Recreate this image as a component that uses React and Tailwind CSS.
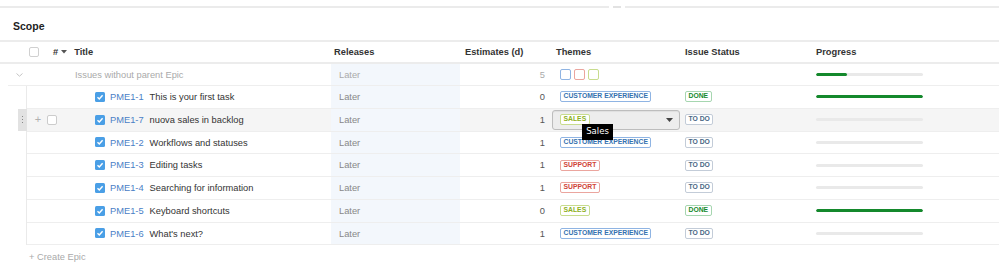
import React from 'react';

const themeStyles = {
    'CUSTOMER EXPERIENCE': 'text-[#3572b0] border-[#8fb4e3]',
    SALES: 'text-[#8eb021] border-[#c8dc8e]',
    SUPPORT: 'text-[#d04437] border-[#eba59e]',
};

const statusStyles = {
    DONE: 'text-[#14892c] border-[#a6d6b0]',
    'TO DO': 'text-[#4a6785] border-[#c3ccd8]',
};

const issues = [
    { key: 'PME1-1', title: 'This is your first task', estimate: 0, theme: 'CUSTOMER EXPERIENCE', status: 'DONE', progress: 100 },
    { key: 'PME1-7', title: 'nuova sales in backlog', estimate: 1, theme: 'SALES', status: 'TO DO', progress: 0, hover: true },
    { key: 'PME1-2', title: 'Workflows and statuses', estimate: 1, theme: 'CUSTOMER EXPERIENCE', status: 'TO DO', progress: 0 },
    { key: 'PME1-3', title: 'Editing tasks', estimate: 1, theme: 'SUPPORT', status: 'TO DO', progress: 0 },
    { key: 'PME1-4', title: 'Searching for information', estimate: 1, theme: 'SUPPORT', status: 'TO DO', progress: 0 },
    { key: 'PME1-5', title: 'Keyboard shortcuts', estimate: 0, theme: 'SALES', status: 'DONE', progress: 100 },
    { key: 'PME1-6', title: "What's next?", estimate: 1, theme: 'CUSTOMER EXPERIENCE', status: 'TO DO', progress: 0 },
];

function Badge({ label, styles }) {
    return (
        <span className={`inline-flex h-[11px] items-center rounded-[2px] border bg-white px-[2.5px] text-[6.8px] leading-none font-bold ${styles}`}>
            {label}
        </span>
    );
}

function CheckedBox() {
    return (
        <span className="flex h-[10px] w-[10px] items-center justify-center rounded-[1.5px] bg-[#4a9fe6]">
            <svg width="8" height="8" viewBox="0 0 8 8">
                <path d="M1.5 4.2 L3.3 6 L6.6 2.2" fill="none" stroke="white" strokeWidth="1.4" />
            </svg>
        </span>
    );
}

function ProgressBar({ value }) {
    return (
        <div className="h-[3px] w-[107px] overflow-hidden rounded-full bg-[#e9e9e9]">
            <div className="h-full rounded-full bg-[#14892c]" style={{ width: `${value}%` }} />
        </div>
    );
}

function IssueRow({ issue }) {
    return (
        <div className={`relative flex h-[22.75px] items-center border-b border-[#eeeeee] ${issue.hover ? 'bg-[#f5f5f5]' : ''}`}>
            {issue.hover && (
                <div className="absolute top-0 -left-[9px] flex h-full w-[9px] flex-col items-center justify-center gap-[1.5px] bg-[#e2e2e2]">
                    <span className="h-[1.5px] w-[1.5px] bg-[#888]" />
                    <span className="h-[1.5px] w-[1.5px] bg-[#888]" />
                    <span className="h-[1.5px] w-[1.5px] bg-[#888]" />
                </div>
            )}
            <div className="flex h-full w-[304px] items-center">
                <div className="flex w-[68px] items-center">
                    {issue.hover && (
                        <>
                            <span className="ml-[6px] w-[10px] text-center text-[11px] leading-none text-[#b0b0b0]">+</span>
                            <span className="ml-[4px] h-[10px] w-[10px] rounded-[2px] border border-[#cccccc] bg-white" />
                        </>
                    )}
                </div>
                <CheckedBox />
                <span className="relative top-px ml-[5px] text-[#4a80c6]">{issue.key}</span>
                <span className="relative top-px ml-[6px] text-[#333333]">{issue.title}</span>
            </div>
            <div className="flex h-full w-[129px] items-center bg-[#f3f7fc] pt-[2px] pl-[8px] text-[#888888]">Later</div>
            <div className="relative top-px w-[90px] pr-[5px] text-right text-[#555555]">{issue.estimate}</div>
            {issue.hover ? (
                <div className="flex w-[130px] items-center pl-[2px]">
                    <div className="relative flex h-[20px] w-[128px] items-center rounded-[3px] border border-[#bdbdbd] bg-[#ededed] pr-[6px] pl-[7px] shadow-[inset_0_1px_1px_rgba(0,0,0,0.06)]">
                        <Badge label={issue.theme} styles={themeStyles[issue.theme]} />
                        <svg className="ml-auto" width="7" height="4" viewBox="0 0 7 4">
                            <path d="M0 0 L7 0 L3.5 4 Z" fill="#444" />
                        </svg>
                        <div
                            className="absolute top-[13px] left-[29px] z-10 flex h-[16px] w-[31px] items-center justify-center bg-black text-[8.5px] text-white"
                            style={{ fontFamily: '"DejaVu Sans", sans-serif' }}
                        >
                            Sales
                        </div>
                    </div>
                </div>
            ) : (
                <div className="flex w-[130px] items-center pl-[10px]">
                    <Badge label={issue.theme} styles={themeStyles[issue.theme]} />
                </div>
            )}
            <div className="flex w-[130px] items-center pl-[5px]">
                <Badge label={issue.status} styles={statusStyles[issue.status]} />
            </div>
            <div className="flex items-center pl-[6px]">
                <ProgressBar value={issue.progress} />
            </div>
        </div>
    );
}

export default function App() {
    return (
        <div
            className="h-[268px] w-[999px] overflow-hidden bg-white text-[9.3px] leading-none text-[#333333]"
            style={{ fontFamily: '"Liberation Sans", Arial, sans-serif' }}
        >
            <div className="flex gap-[4px] pt-[6px]">
                <div className="h-[2px] w-[609px] bg-[#ebebeb]" />
                <div className="h-[2px] w-[8px] bg-[#e2e2e2]" />
                <div className="h-[2px] flex-1 bg-[#ebebeb]" />
            </div>

            <div className="flex h-[32px] items-center pt-[5px] pl-[13px] text-[10.5px] font-bold text-[#222222]">Scope</div>

            <div className="flex h-[24px] items-center border-y-2 border-[#ececec] font-bold text-[#333333]">
                <div className="flex w-[331px] items-center pl-[29px]">
                    <span className="h-[10px] w-[10px] rounded-[2px] border border-[#d0d0d0] bg-white" />
                    <span className="relative top-px ml-[14px]">#</span>
                    <svg className="ml-[3px]" width="6" height="4" viewBox="0 0 6 4">
                        <path d="M0 0 L6 0 L3 3.5 Z" fill="#555" />
                    </svg>
                    <span className="relative top-px ml-[7px]">Title</span>
                </div>
                <div className="relative top-px w-[129px] pl-[3px]">Releases</div>
                <div className="relative top-px w-[90px] pl-[5px]">Estimates (d)</div>
                <div className="relative top-px w-[130px] pl-[6px]">Themes</div>
                <div className="relative top-px w-[130px] pl-[5px]">Issue Status</div>
                <div className="relative top-px pl-[6px]">Progress</div>
            </div>

            <div className="ml-[8px] flex h-[22px] items-center border-b border-[#eeeeee]">
                <div className="flex h-full w-[323px] items-center">
                    <div className="flex w-[67px] items-center pl-[8px]">
                        <svg width="7" height="4" viewBox="0 0 7 4">
                            <path d="M0.5 0.5 L3.5 3.2 L6.5 0.5" fill="none" stroke="#c4c4c4" strokeWidth="1" />
                        </svg>
                    </div>
                    <span className="relative top-px text-[#aaaaaa]">Issues without parent Epic</span>
                </div>
                <div className="flex h-full w-[129px] items-center bg-[#f3f7fc] pt-[2px] pl-[8px] text-[#aaaaaa]">Later</div>
                <div className="relative top-px w-[90px] pr-[5px] text-right text-[#aaaaaa]">5</div>
                <div className="flex w-[130px] items-center gap-[3px] pl-[10px]">
                    <span className="h-[11px] w-[11px] rounded-[2px] border border-[#8fb4e3]" />
                    <span className="h-[11px] w-[11px] rounded-[2px] border border-[#eba59e]" />
                    <span className="h-[11px] w-[11px] rounded-[2px] border border-[#c8dc8e]" />
                </div>
                <div className="w-[130px]" />
                <div className="flex items-center pl-[6px]">
                    <ProgressBar value={29} />
                </div>
            </div>

            <div className="ml-[26px] border-l border-[#eaeaea]">
                {issues.map((issue) => (
                    <IssueRow key={issue.key} issue={issue} />
                ))}
            </div>

            <div className="flex h-[22px] items-center pt-[2px] pl-[29px] text-[#aaaaaa]">+ Create Epic</div>
        </div>
    );
}
